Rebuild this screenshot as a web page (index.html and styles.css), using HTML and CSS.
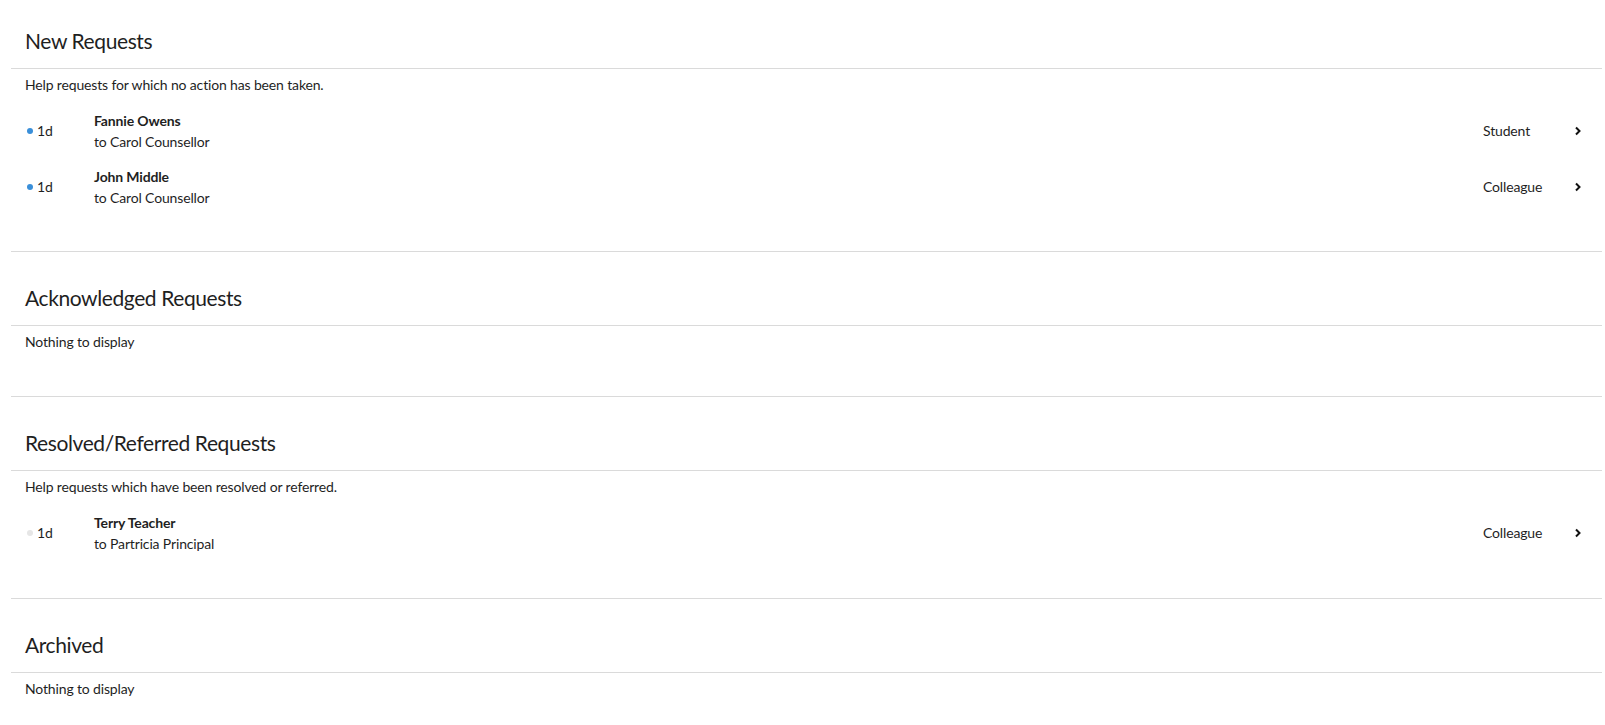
FILE: index.html
```html
<!DOCTYPE html>
<html lang="en">
    <head>
        <meta charset="UTF-8">
        <title>Help Requests</title>
        <link rel="stylesheet" href="styles.css">
    </head>
    <body>
        <div class="requests">
            <section class="section">
                <h2>New Requests</h2>
                <div class="content">
                    <p class="desc">Help requests for which no action has been taken.</p>
                    <div class="rows">
                        <div class="row">
                            <div class="age"><span class="dot new"></span>1d</div>
                            <div class="who">
                                <div class="name">Fannie Owens</div>
                                <div class="to">to Carol Counsellor</div>
                            </div>
                            <div class="role">Student</div>
                            <div class="chev"><svg width="8" height="10" viewBox="0 0 8 10"><polyline points="2,1.5 5.5,5 2,8.5" fill="none" stroke="#111" stroke-width="2"/></svg></div>
                        </div>
                        <div class="row">
                            <div class="age"><span class="dot new"></span>1d</div>
                            <div class="who">
                                <div class="name">John Middle</div>
                                <div class="to">to Carol Counsellor</div>
                            </div>
                            <div class="role">Colleague</div>
                            <div class="chev"><svg width="8" height="10" viewBox="0 0 8 10"><polyline points="2,1.5 5.5,5 2,8.5" fill="none" stroke="#111" stroke-width="2"/></svg></div>
                        </div>
                    </div>
                </div>
            </section>

            <section class="section">
                <h2>Acknowledged Requests</h2>
                <div class="content">
                    <p class="empty">Nothing to display</p>
                </div>
            </section>

            <section class="section">
                <h2>Resolved/Referred Requests</h2>
                <div class="content">
                    <p class="desc">Help requests which have been resolved or referred.</p>
                    <div class="rows">
                        <div class="row">
                            <div class="age"><span class="dot done"></span>1d</div>
                            <div class="who">
                                <div class="name">Terry Teacher</div>
                                <div class="to">to Partricia Principal</div>
                            </div>
                            <div class="role">Colleague</div>
                            <div class="chev"><svg width="8" height="10" viewBox="0 0 8 10"><polyline points="2,1.5 5.5,5 2,8.5" fill="none" stroke="#111" stroke-width="2"/></svg></div>
                        </div>
                    </div>
                </div>
            </section>

            <section class="section">
                <h2>Archived</h2>
                <div class="content">
                    <p class="empty">Nothing to display</p>
                </div>
            </section>
        </div>
    </body>
</html>
```
FILE: styles.css
```css
* {
    margin: 0; padding: 0; box-sizing: border-box;
}

html, body {
    background-color: white;
    color: #1f1f1f;
    font-family: Lato, sans-serif;
    font-size: 14px;
    line-height: 20px;
    letter-spacing: -0.15px;
}

.requests {
    margin: 0 3px 0 11px;
}

.section {
    border-bottom: 1px solid #dadada;
}

.section h2 {
    font-size: 21px;
    font-weight: normal;
    line-height: 26px;
    letter-spacing: -0.4px;
    padding: 33px 14px 14px;
    border-bottom: 1px solid #dadada;
}

.section:first-child h2 {
    padding-top: 28px;
}

.section:first-child .content {
    padding-bottom: 43px;
}

.content {
    padding: 6px 14px 44px;
}

.desc {
    margin-bottom: 15px;
}

.rows {
    display: flex;
    flex-direction: column;
    gap: 14px;
}

.row {
    display: flex;
    align-items: center;
}

.age {
    width: 69px;
    display: flex;
    align-items: center;
}

.dot {
    width: 6px;
    height: 6px;
    border-radius: 50%;
    margin: 0 4px 0 2px;
}

.dot.new {
    background-color: #3a8fd9;
}

.dot.done {
    background-color: #e6e6e6;
}

.who {
    flex: 1;
    line-height: 21px;
}

.name {
    font-weight: bold;
}

.role {
    width: 91px;
}

.chev {
    width: 14px;
    display: flex;
    align-items: center;
}
```
